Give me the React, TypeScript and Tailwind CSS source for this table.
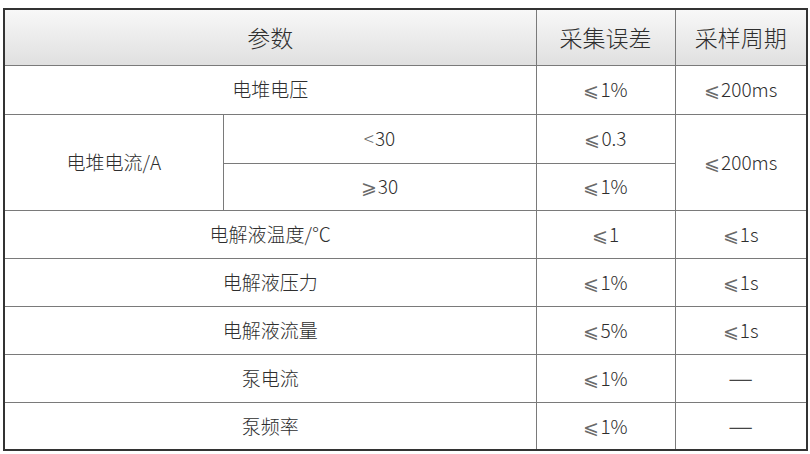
import React from "react";

const F = { fontFamily: '"Noto Sans CJK SC", "Noto Sans", sans-serif' };

const td = "border border-[#7a7a7a] text-center align-middle p-0";

function V({ s }: { s: string }) {
  if (s === "—") return <span className="text-[28px] leading-none text-[#444]">—</span>;
  const m = s.match(/^([⩽⩾<])(.*)$/);
  if (!m) return <>{s}</>;
  return (
    <>
      <span className="text-[#6a6a6a] mr-[1px]">{m[1]}</span>
      {m[2]}
    </>
  );
}

export default function App() {
  const rows: [string, string, string][] = [
    ["电解液温度/℃", "⩽1", "⩽1s"],
    ["电解液压力", "⩽1%", "⩽1s"],
    ["电解液流量", "⩽5%", "⩽1s"],
    ["泵电流", "⩽1%", "—"],
    ["泵频率", "⩽1%", "—"],
  ];
  return (
    <div className="w-[810px] h-[454px] bg-white pt-[8px] pl-[3px]" style={F}>
      <table className="table-fixed border-collapse w-[803px] border-2 border-[#333] text-[19px] font-light text-[#2e2e2e]">
        <colgroup>
          <col className="w-[219px]" />
          <col className="w-[313px]" />
          <col className="w-[139px]" />
          <col className="w-[132px]" />
        </colgroup>
        <thead>
          <tr className="h-[56px] bg-gradient-to-b from-[#f8f8f8] to-[#e0e0e0] text-[23px]">
            <th colSpan={2} className={td + " font-light"}>参数</th>
            <th className={td + " font-light"}>采集误差</th>
            <th className={td + " font-light"}>采样周期</th>
          </tr>
        </thead>
        <tbody>
          <tr className="h-[49px]">
            <td colSpan={2} className={td}>电堆电压</td>
            <td className={td}><V s="⩽1%" /></td>
            <td className={td}><V s="⩽200ms" /></td>
          </tr>
          <tr className="h-[49px]">
            <td rowSpan={2} className={td}>电堆电流/A</td>
            <td className={td}><V s="<30" /></td>
            <td className={td}><V s="⩽0.3" /></td>
            <td rowSpan={2} className={td}><V s="⩽200ms" /></td>
          </tr>
          <tr className="h-[47px]">
            <td className={td}><V s="⩾30" /></td>
            <td className={td}><V s="⩽1%" /></td>
          </tr>
          {rows.map((r, i) => (
            <tr key={i} className="h-[48px]">
              <td colSpan={2} className={td}>{r[0]}</td>
              <td className={td}><V s={r[1]} /></td>
              <td className={td}><V s={r[2]} /></td>
            </tr>
          ))}
        </tbody>
      </table>
    </div>
  );
}
